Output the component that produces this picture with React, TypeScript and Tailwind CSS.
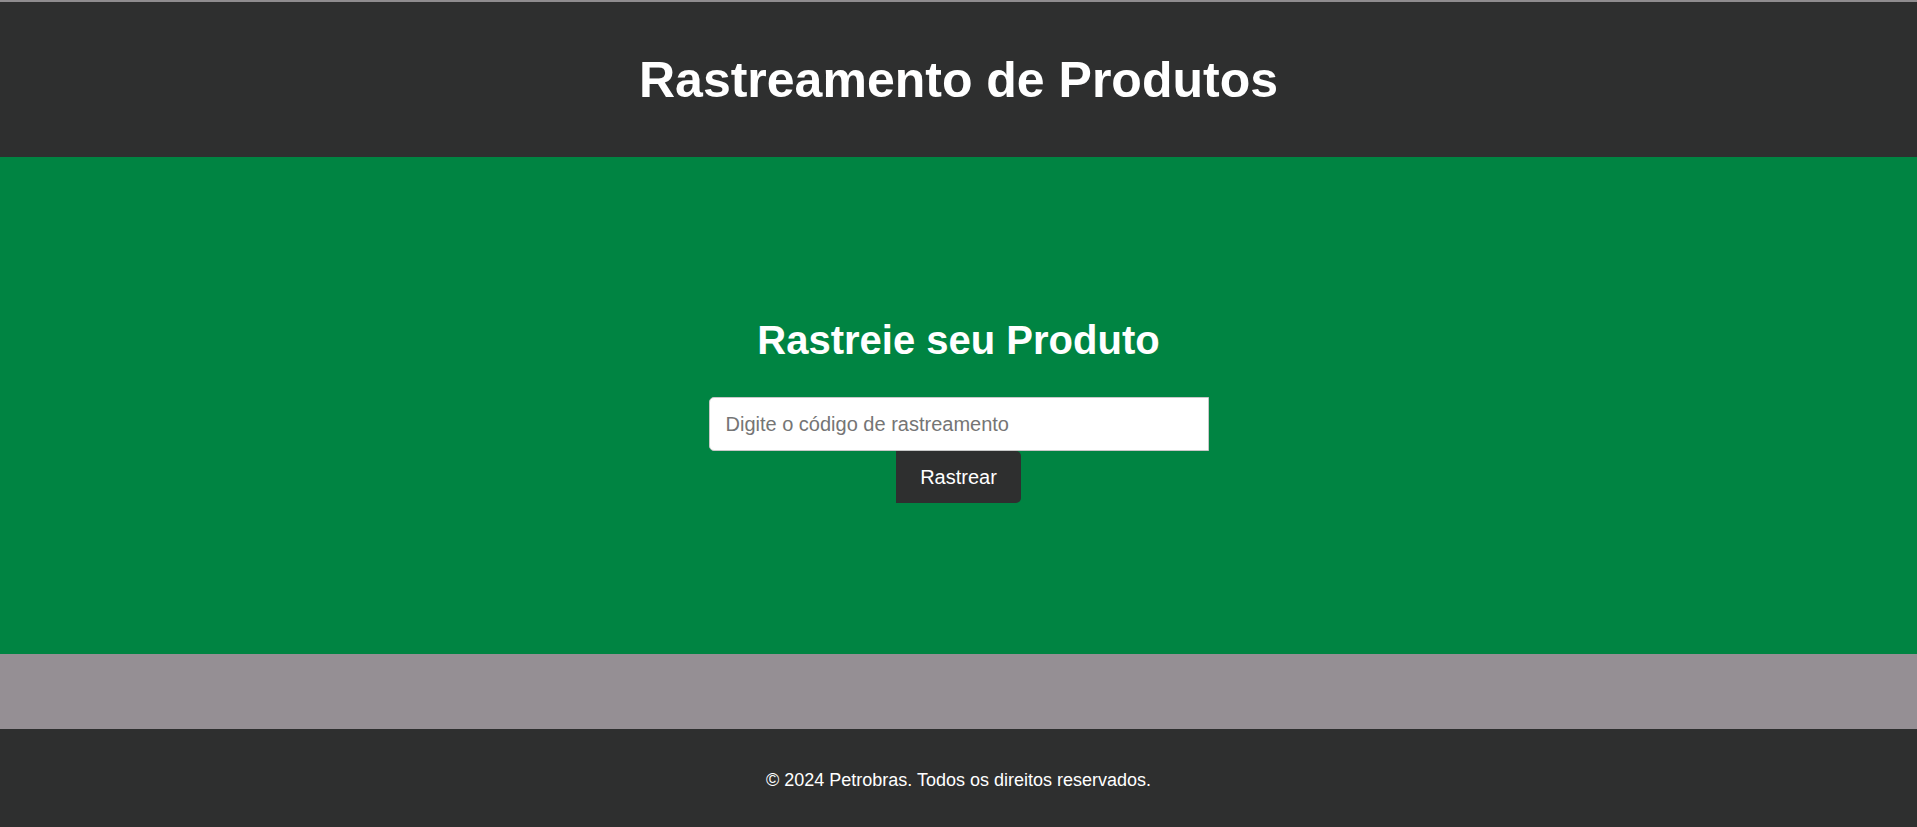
import React from 'react';

export default function App() {
  return (
    <div className="min-h-[827px] flex flex-col font-['Liberation_Sans',Arial,sans-serif]">
      <div className="h-[2px] bg-[#8f8c8f]" />

      <header className="h-[155px] bg-[#2e2f2f] flex items-center justify-center">
        <h1 className="text-[50px] leading-[56px] font-bold text-white">Rastreamento de Produtos</h1>
      </header>

      <main className="h-[497px] bg-[#008442] flex flex-col items-center pt-[160px]">
        <h2 className="text-[40px] leading-[46px] font-bold text-white mb-[34px]">Rastreie seu Produto</h2>
        <input
          type="text"
          placeholder="Digite o código de rastreamento"
          className="w-[500px] h-[54px] px-[16px] text-[20px] bg-white border border-[#c8c8c8] rounded-l-[5px] text-[#333] placeholder:text-[#757575] outline-none"
        />
        <button className="h-[52px] px-[24px] bg-[#2e2f2f] text-white text-[20px] rounded-r-[5px]">
          Rastrear
        </button>
      </main>

      <section className="h-[75px] bg-[#958f94]" />

      <footer className="h-[98px] bg-[#2e2f2f] flex items-center justify-center pt-[4px]">
        <p className="text-[18px] text-white">© 2024 Petrobras. Todos os direitos reservados.</p>
      </footer>
    </div>
  );
}
